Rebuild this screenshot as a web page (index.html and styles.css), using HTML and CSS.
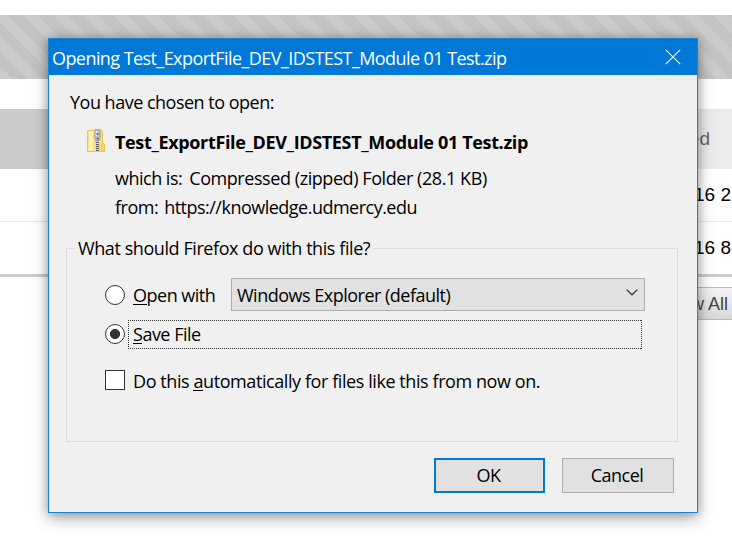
FILE: index.html
```html
<!DOCTYPE html>
<html lang="en">
<head>
<meta charset="utf-8">
<title>Opening Test_ExportFile_DEV_IDSTEST_Module 01 Test.zip</title>
<link rel="stylesheet" href="styles.css">
</head>
<body>
<main class="page">
  <div class="stripes"></div>
  <div class="table">
    <div class="table-head"><span class="head-name"></span><span class="head-date"><span>ed</span></span></div>
    <div class="table-row"><span>16 2</span></div>
    <div class="table-row last"><span>16 8</span></div>
  </div>
  <div class="table-foot"><span class="view-all">w All</span></div>
</main>

<section class="dialog" role="dialog">
  <header class="titlebar">
    <span class="t title">Opening Test_ExportFile_DEV_IDSTEST_Module 01 Test.zip</span>
    <svg class="close" width="16" height="16" viewBox="0 0 16 16"><path d="M.8 .8 15.2 15.2M15.2 .8 .8 15.2"/></svg>
  </header>
  <div class="content">
    <p class="line chosen"><span class="t w-chosen">You have chosen to open:</span></p>
    <div class="file">
      <svg class="zip" width="18" height="24" viewBox="0 0 18 24">
        <path d="M.5 1.5h15v12l2 1.5v7.5H.5z" fill="#fbe08a" stroke="#e9c64e"/>
        <path d="M2 2.5h4v19H2z" fill="#fff0ad"/>
        <path d="M14.5 22v-7.5l1-1 2 1.5v7z" fill="#f8d56c" stroke="#e9c64e" stroke-width=".7"/>
        <path d="M8 11h5v12H8z" fill="#e0d7b0"/>
        <path d="M10.5 11v12" stroke="#555" stroke-width="3" stroke-dasharray="1 1"/>
        <path d="M8 .5h5l.5 8-1 3h-4l-1-3z" fill="#b9bdc2" stroke="#9499a0" stroke-width=".7"/>
        <path d="M9.5 2v5" stroke="#e9ebed" stroke-width="1.4"/>
        <path d="M9.5 5h2M9.7 9.5h2" stroke="#555b63" stroke-width="1.3"/>
      </svg>
      <div class="details">
        <p class="line name"><span class="t w-name">Test_ExportFile_DEV_IDSTEST_Module 01 Test.zip</span></p>
        <p class="line which"><span class="t w-which">which is:</span><span class="t w-type">Compressed (zipped) Folder (28.1 KB)</span></p>
        <p class="line from"><span class="t w-from">from:</span><span class="t w-url">https://knowledge.udmercy.edu</span></p>
      </div>
    </div>
    <fieldset class="group">
      <legend><span class="t w-legend">What should Firefox do with this file?</span></legend>
      <div class="option open">
        <span class="radio"></span>
        <span class="t w-open"><u>O</u>pen with</span>
        <div class="select"><span class="t w-select">Windows Explorer (default)</span>
          <svg width="12" height="7" viewBox="0 0 12 7"><path d="M.6 .6 6 5.8 11.4 .6"/></svg>
        </div>
      </div>
      <div class="option save">
        <span class="radio checked"></span>
        <div class="focus">
          <svg class="focus-ring" width="515" height="29" shape-rendering="crispEdges"><path d="M0 .5H514M0 28.5H514M.5 0V29M513.5 0V29"/></svg>
          <span class="t w-save"><u>S</u>ave File</span></div>
      </div>
      <div class="option auto">
        <span class="check"></span>
        <span class="t w-auto">Do this <u>a</u>utomatically for files like this from now on.</span>
      </div>
    </fieldset>
    <footer class="actions">
      <button class="ok"><span class="t w-ok">OK</span></button>
      <button class="cancel"><span class="t w-cancel">Cancel</span></button>
    </footer>
  </div>
</section>
</body>
</html>
```
FILE: styles.css
```css
* { box-sizing: border-box; }
body { margin: 0; width: 732px; height: 540px; overflow: hidden; background: #fff; font: 18px/24px "Open Sans", "Noto Sans", sans-serif; color: #000; position: relative; }
p { margin: 0; }
.page { padding-top: 15px; font: 19px/24px "Liberation Sans", Arial, sans-serif; }
.stripes { height: 64px; background: repeating-linear-gradient(45deg, #cbcbcb 0 8.5px, #c3c3c3 8.5px 19.1px, #cbcbcb 19.1px 21.2px); }
.table { margin-top: 30px; border-bottom: 3px solid #ccc; }
.table-head { display: flex; height: 60px; }
.head-name { width: 400px; background: #ccc; }
.head-date { flex: 1; background: #ebebeb; color: #666; padding: 18px 22px 0 0; text-align: right; }
.table-row { height: 53px; border-bottom: 1px solid #e8e8e8; text-align: right; padding: 14px 1px 0 0; }
.table-row.last { height: 52px; border-bottom: 0; }
.table-foot { display: flex; justify-content: flex-end; margin-top: 10px; }
.view-all { width: 80px; height: 33px; border: 1px solid #bbb; border-right: 0; background: linear-gradient(#f4f4f4, #d8d8d8); color: #444; text-align: right; padding: 4px 4px 0 0; font-size: 18px; }

.dialog { position: absolute; left: 48px; top: 38px; width: 650px; height: 475px; border: 1px solid #1883d7; background: #f0f0f0; box-shadow: 0 5px 15px rgba(0,0,0,.35), 0 0 8px rgba(0,0,0,.18); }
.t { white-space: nowrap; display: inline-block; letter-spacing: -.5px; }
.title { letter-spacing: -.57px; }
.w-chosen { letter-spacing: -.5px; }
.w-name { letter-spacing: -.35px; }
.w-type { letter-spacing: -.43px; }
.w-url { letter-spacing: -.51px; }
.w-legend, .w-auto { letter-spacing: -.42px; }
.w-select { letter-spacing: -.5px; }
u { text-decoration: none; display: inline-block; border-bottom: 1px solid #000; height: 22px; line-height: 24px; vertical-align: top; }
.titlebar { height: 36px; background: #0078d7; color: #fff; display: flex; justify-content: space-between; align-items: center; padding: 1px 16px 0 3px; }
.close { fill: none; stroke: #fff; stroke-width: 1.1; margin-top: -2px; }
.content { padding: 15px 19px 19px 17px; }
.chosen { padding-left: 4px; }
.line { height: 24px; display: flex; }
.file { display: flex; margin: 15px 0 0 21px; }
.details { margin: 1px 0 0 10px; }
.name { font-weight: 700; height: 24px; }
.which { margin-top: 12px; gap: 7px; }
.from { margin-top: 5px; gap: 6px; }
.group { margin: 17px 0 0; padding: 0; height: 206px; border: 1px solid #dcdcdc; min-width: 0; }
legend { margin-left: 8px; padding: 0 3px; height: 24px; }
.option { display: flex; align-items: center; padding-left: 38px; }
.radio { width: 20px; height: 20px; border: 1px solid #333; border-radius: 50%; background: #fff; flex: none; }
.checked { background: radial-gradient(circle, #333 0 4.7px, #fff 5.3px); }
.open { height: 33px; margin-top: 18px; }
.w-open { margin-left: 8px; width: 82px; }
.select { margin-left: 16px; width: 414px; height: 33px; border: 1px solid #adadad; background: #e1e1e1; display: flex; align-items: center; justify-content: space-between; padding: 0 6px 0 5px; }
.select .t { margin: 1px 0 0; }
.select svg { fill: none; stroke: #333; stroke-width: 1.3; margin-top: -4px; }
.save { margin-top: 9px; height: 29px; }
.save .radio { margin-top: -2px; }
.focus { position: relative; margin-left: 3px; width: 514px; height: 29px; padding: 2px 0 0 5px; }
.focus-ring { position: absolute; left: 0; top: 0; fill: none; stroke: #333; stroke-dasharray: 1 1; }
.auto { margin-top: 20px; height: 24px; }
.check { width: 20px; height: 20px; border: 1px solid #333; background: #fff; margin-top: -2px; }
.auto .t { margin-left: 8px; }
.actions { display: flex; justify-content: flex-end; gap: 17px; margin-top: 16px; padding-right: 4px; }
button { font: inherit; color: #000; background: #e1e1e1; border: 1px solid #adadad; height: 35px; width: 112px; padding: 0 2px 2px 0; }
.ok { border: 2px solid #0078d7; width: 111px; }
```
